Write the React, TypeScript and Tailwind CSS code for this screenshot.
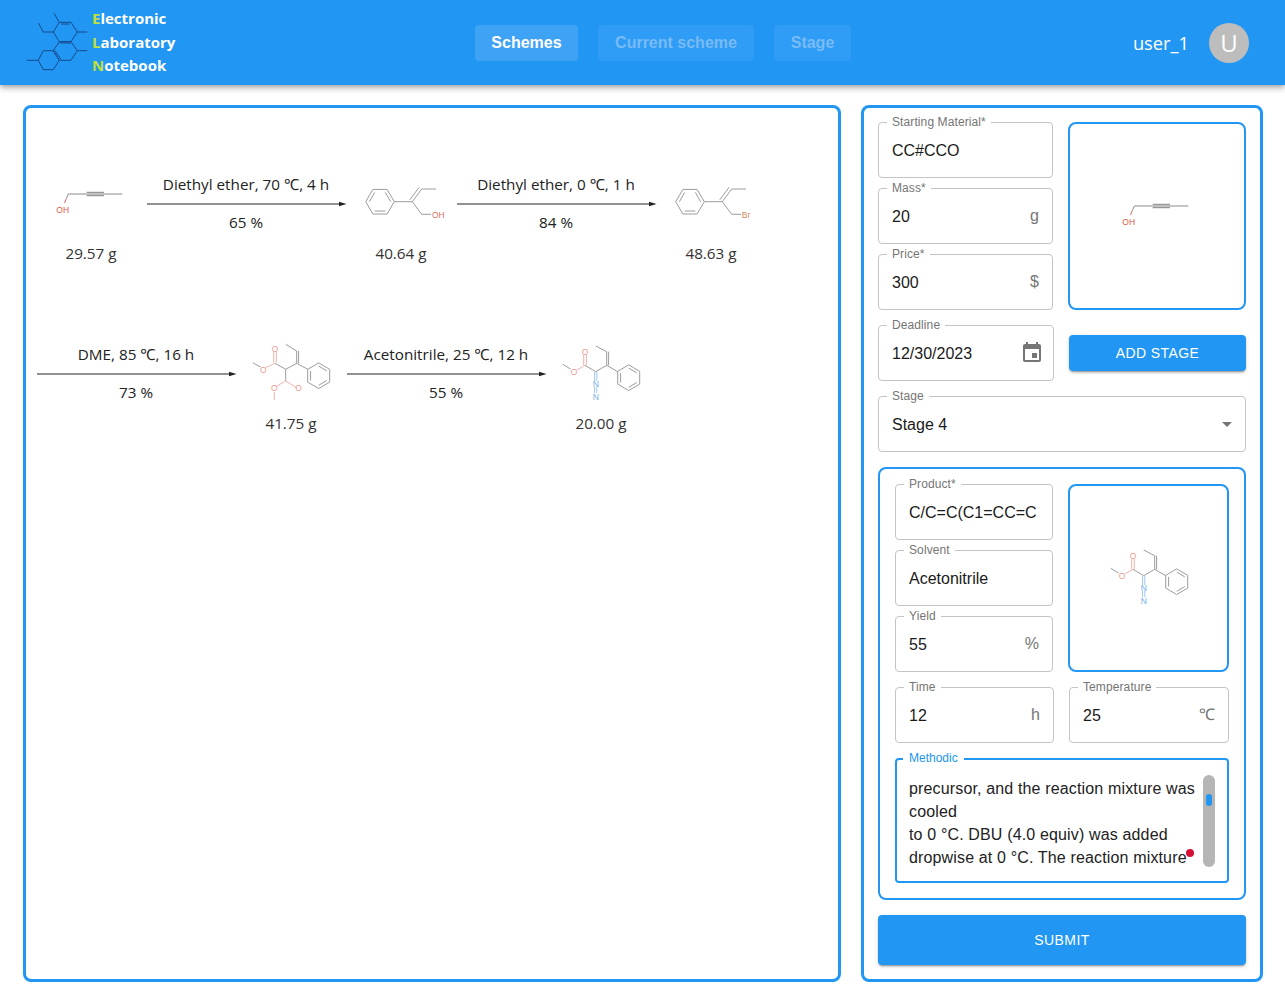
import type {ReactNode} from "react"

const sans = "font-['Liberation_Sans',Arial,sans-serif]"
const soft = "font-['Open_Sans','Noto_Sans',sans-serif]"

function Bonds({d, color = "#9c9c9c"}: {d: string, color?: string}) {
    return <path d={d} fill="none" stroke={color} strokeWidth="1" />
}

function Atom({x, y, color, children}: {x: number, y: number, color: string, children: string}) {
    return <text x={x} y={y} fill={color} fontSize="8.5" textAnchor="middle" dominantBaseline="central" fontFamily="'Liberation Sans', sans-serif">{children}</text>
}

function Svg({children}: {children: ReactNode}) {
    return <svg width="110" height="80" viewBox="0 0 110 80" className="block shrink-0">{children}</svg>
}

function Butynol() {
    return <Svg>
        <Bonds d="M30.4 33.5 L32.3 29 H50.7 M68 29 H86.3" color="#8a8a8a" />
        <Bonds d="M50.7 29 H68 M50.7 27.3 H68 M50.7 30.7 H68" color="#808080" />
        <Bonds d="M28.5 38 L30.4 33.5" color="#e06a5e" />
        <Atom x={26.7} y={45} color="#e0564a">OH</Atom>
    </Svg>
}

function PhenylAlkene({atom, atomX, color}: {atom: string, atomX: number, color: string}) {
    return <Svg>
        <Bonds d="M48.3 36.7 L41.1 24.4 H26.9 L19.7 36.7 L26.9 49 H41.1 Z" />
        <Bonds d="M44.6 36.7 L39.3 27.4 M28.7 27.4 L23.4 36.7 M28.7 46 H39.3" />
        <Bonds d="M48.3 36.7 H66.3 L75.7 24 H90 M63.8 34.8 L73.2 22.2 M66.3 36.7 L75.7 49.3 H85" />
        <Atom x={atomX} y={50} color={color}>{atom}</Atom>
    </Svg>
}

function Benzene({cy}: {cy: number}) {
    const top = cy - 12.8
    const bottom = cy + 12.8
    const upper = cy - 6.4
    const lower = cy + 6.4
    return <>
        <Bonds d={`M71.7 ${upper} L82.7 ${top} L93.7 ${upper} V${lower} L82.7 ${bottom} L71.7 ${lower} Z`} />
        <Bonds d={`M82.7 ${top + 3.2} L90.8 ${upper + 1.6} M90.8 ${lower - 1.6} L82.7 ${bottom - 3.2} M74.6 ${lower - 1.6} V${upper + 1.6}`} />
    </>
}

function Malonate() {
    const red = "#eeb5af"
    return <Svg>
        <Bonds d="M16.7 27.7 L24.5 32" />
        <Bonds d="M30 32.5 L39 28.3 M37.7 27.5 V17 M40.3 27.5 V17" color={red} />
        <Bonds d="M39 28.3 L49.7 34.3 L60.7 28.3 V16 L49.7 9.3 M62.6 28.3 V16 M60.7 28.3 L71.7 34.3 M49.7 34.3 V46" />
        <Bonds d="M49.7 46 L60.7 52.7 M49.7 46 L41 51 M38.3 57 V65" color={red} />
        <Atom x={27.3} y={34.5} color="#ec9a92">O</Atom>
        <Atom x={39} y={14} color="#ec9a92">O</Atom>
        <Atom x={38.3} y={53} color="#ec9a92">O</Atom>
        <Atom x={62.5} y={53} color="#ec9a92">O</Atom>
        <Benzene cy={40.7} />
    </Svg>
}

function Diazo() {
    const red = "#eeb5af"
    const blue = "#9cc8ee"
    return <Svg>
        <Bonds d="M16.7 29.3 L24.5 34" />
        <Bonds d="M31 35 L39 30.3 M37.7 30 V20 M40.3 30 V20" color={red} />
        <Bonds d="M39 30.3 L49.7 36.7 L60.7 30.3 V16.7 L49.7 11 M62.6 30.3 V16.7 M60.7 30.3 L71.7 36.7" />
        <Bonds d="M48.6 37 V46 M50.8 37 V46 M48.6 52 V58 M50.8 52 V58" color={blue} />
        <Atom x={28} y={36.5} color="#ec9a92">O</Atom>
        <Atom x={39} y={17} color="#ec9a92">O</Atom>
        <Atom x={49.7} y={49.3} color="#6fb0ea">N</Atom>
        <Atom x={49.7} y={61.7} color="#6fb0ea">N</Atom>
        <Benzene cy={42.7} />
    </Svg>
}

function Compound({mass, children}: {mass: string, children: ReactNode}) {
    return <div className="w-[110px] h-[170px] pt-[15px] flex flex-col items-center">
        {children}
        <div className="mt-[-3px] leading-[22px] text-[15.25px] text-[#333]">{mass}</div>
    </div>
}

function Reaction({conditions, yieldText}: {conditions: string, yieldText: string}) {
    return <div className="w-[200px] h-[170px] pt-[23px] flex flex-col items-center text-[15.25px] text-[#222]">
        <div className="leading-[22px] whitespace-nowrap">{conditions}</div>
        <svg width="200" height="8" viewBox="0 0 200 8" className="block mt-[5px] ml-[1px]">
            <path d="M0 4 H194" stroke="#222" strokeWidth="1" />
            <path d="M192 1.8 L199.5 4 L192 6.2 Z" fill="#222" />
        </svg>
        <div className="mt-[3px] leading-[22px]">{yieldText}</div>
    </div>
}

function Field({label, value, suffix, className, suffixClass}: {label: string, value: string, suffix?: ReactNode, className: string, suffixClass?: string}) {
    return <div className={"relative h-[56px] shrink-0 rounded border border-[#c4c4c4] flex items-center pl-[13px] pr-[13px] " + className}>
        <span className="absolute left-[8px] top-[-8px] px-[5px] bg-white text-[12px] tracking-[0.1px] leading-[14px] text-[#757575] whitespace-nowrap">{label}</span>
        <span className="flex-1 pt-[2px] overflow-hidden whitespace-nowrap text-[16px] text-[#1a1a1a]">{value}</span>
        {suffix && <span className={"text-[16px] text-[#757575] " + (suffixClass ?? "")}>{suffix}</span>}
    </div>
}

function Preview({className, children}: {className: string, children: ReactNode}) {
    return <div className={"h-[188px] pt-[2px] rounded-lg border-2 border-[#2196f3] flex items-center justify-center " + className}>
        {children}
    </div>
}

function Logo() {
    return <svg width="90" height="64" viewBox="26 12 90 64" className="block shrink-0" fill="none" stroke="#164a8c" strokeWidth="1">
        <path d="M59.3 23.3 H71 L77.3 33 L71 42.7 H59.3 L53.3 33 Z" />
        <path d="M59.3 42.7 H71 L77.3 51.7 L71 61.3 H59.3 L53.3 51.7 Z" />
        <path d="M53.3 51.7 L59.3 61.3 L53.3 70.7 H43.3 L38.3 61.3 L43.3 51.7 Z" />
        <path d="M59.3 23.3 L54 14.3 M53.3 33 H43.3 L38.3 24 M77.3 33 H87.3 M77.3 51.7 H87.3 M38.3 61.3 H26.7" />
        <path d="M61 25 H69.3 M60 44 H70.7 M55 51.7 L60.7 60" />
    </svg>
}

function NavButton({children, className, active}: {children: string, className: string, active?: boolean}) {
    return <div className={"h-[36px] rounded flex items-center justify-center text-[16px] font-bold " + className + " " + (active ? "bg-[#3fa3f5] text-white" : "bg-[#2f9cf5] text-[#78bbf6]")}>
        {children}
    </div>
}

function ActionButton({children, className}: {children: string, className: string}) {
    return <div className={"rounded bg-[#2196f3] text-white text-[14px] tracking-[0.4px] flex items-center justify-center shadow-[0_3px_1px_-2px_rgba(0,0,0,0.2),0_2px_2px_0_rgba(0,0,0,0.14),0_1px_5px_0_rgba(0,0,0,0.12)] " + className}>
        {children}
    </div>
}

export default function App() {
    return <div className={"w-[1285px] h-[1006px] bg-white overflow-hidden " + sans}>
        <header className="h-[85px] bg-[#2196f3] flex items-center shadow-[0_2px_4px_-1px_rgba(0,0,0,0.2),0_4px_5px_0_rgba(0,0,0,0.14),0_1px_10px_0_rgba(0,0,0,0.12)] relative">
            <div className="w-[475px] flex items-center pl-[26px]">
                <Logo />
                <div className={"ml-[-24px] text-[15px] font-bold leading-[23.5px] text-white " + soft}>
                    <div><span className="text-[#bfe03c]">E</span>lectronic</div>
                    <div><span className="text-[#bfe03c]">L</span>aboratory</div>
                    <div><span className="text-[#bfe03c]">N</span>otebook</div>
                </div>
            </div>
            <nav className="flex gap-[20px]">
                <NavButton active className="w-[103px]">Schemes</NavButton>
                <NavButton className="w-[156px]">Current scheme</NavButton>
                <NavButton className="w-[77px]">Stage</NavButton>
            </nav>
            <div className="ml-auto pr-[36px] flex items-center gap-[20px]">
                <span className={"text-[18.3px] text-white " + soft}>user_1</span>
                <div className={"w-[40px] h-[40px] rounded-full bg-[#bdbdbd] text-white text-[24px] flex items-center justify-center " + soft}>U</div>
            </div>
        </header>

        <main className="flex gap-[20px] pl-[23px] pt-[20px]">
            <section className={"w-[818px] h-[877px] rounded-lg border-[3px] border-[#2196f3] pt-[42px] pl-[10px] flex flex-wrap content-start " + soft}>
                <Compound mass="29.57 g"><Butynol /></Compound>
                <Reaction conditions="Diethyl ether, 70 ℃, 4 h" yieldText="65 %" />
                <Compound mass="40.64 g"><PhenylAlkene atom="OH" atomX={92.3} color="#e0705f" /></Compound>
                <Reaction conditions="Diethyl ether, 0 ℃, 1 h" yieldText="84 %" />
                <Compound mass="48.63 g"><PhenylAlkene atom="Br" atomX={90} color="#c98a5f" /></Compound>
                <Reaction conditions="DME, 85 ℃, 16 h" yieldText="73 %" />
                <Compound mass="41.75 g"><Malonate /></Compound>
                <Reaction conditions="Acetonitrile, 25 ℃, 12 h" yieldText="55 %" />
                <Compound mass="20.00 g"><Diazo /></Compound>
            </section>

            <section className="w-[402px] h-[877px] rounded-lg border-[3px] border-[#2196f3] p-[14px]">
                <div className="flex gap-[15px]">
                    <div className="flex flex-col gap-[10px]">
                        <Field label="Starting Material*" value="CC#CCO" className="w-[175px]" />
                        <Field label="Mass*" value="20" suffix="g" className="w-[175px]" />
                        <Field label="Price*" value="300" suffix="$" className="w-[175px]" />
                    </div>
                    <Preview className="w-[178px]"><Butynol /></Preview>
                </div>

                <div className="mt-[15px] flex items-center gap-[15px]">
                    <Field
                        label="Deadline"
                        value="12/30/2023"
                        className="w-[176px]"
                        suffixClass="mr-[-4px]"
                        suffix={<svg width="24" height="24" viewBox="0 0 24 24" fill="#757575" className="block">
                            <path d="M17 12h-5v5h5v-5zM16 1v2H8V1H6v2H5c-1.11 0-1.99.9-1.99 2L3 19c0 1.1.89 2 2 2h14c1.1 0 2-.9 2-2V5c0-1.1-.9-2-2-2h-1V1h-2zm3 18H5V8h14v11z" />
                        </svg>} />
                    <ActionButton className="w-[177px] h-[36px]">ADD STAGE</ActionButton>
                </div>

                <Field
                    label="Stage"
                    value="Stage 4"
                    className="w-[368px] mt-[15px]"
                    suffixClass="mr-[-7px]"
                    suffix={<svg width="24" height="24" viewBox="0 0 24 24" fill="#757575" className="block"><path d="M7 10l5 5 5-5z" /></svg>} />

                <div className="w-[368px] h-[433px] mt-[15px] rounded-lg border-2 border-[#2196f3] p-[15px]">
                    <div className="flex gap-[15px]">
                        <div className="flex flex-col gap-[10px]">
                            <Field label="Product*" value="C/C=C(C1=CC=C" className="w-[158px]" />
                            <Field label="Solvent" value="Acetonitrile" className="w-[158px]" />
                            <Field label="Yield" value="55" suffix="%" className="w-[158px]" />
                        </div>
                        <Preview className="w-[161px]"><Diazo /></Preview>
                    </div>
                    <div className="mt-[15px] flex gap-[15px]">
                        <Field label="Time" value="12" suffix="h" className="w-[159px]" />
                        <Field label="Temperature" value="25" suffix="℃" className="w-[160px]" />
                    </div>
                    <div className="relative w-[334px] h-[125px] mt-[15px] rounded border-2 border-[#2196f3] pl-[12px] pr-[12px] pt-[15px] flex items-start gap-[8px]">
                        <span className="absolute left-[6px] top-[-9px] px-[6px] bg-white text-[12px] leading-[14px] text-[#2196f3]">Methodic</span>
                        <div className="relative w-[288px] h-[94px] pt-[2px] text-[16px] tracking-[0.15px] leading-[23px] text-[#222] overflow-hidden">
                            <div className="whitespace-nowrap">precursor, and the reaction mixture was</div>
                            <div>cooled</div>
                            <div className="whitespace-nowrap">to 0 °C. DBU (4.0 equiv) was added</div>
                            <div className="whitespace-nowrap">dropwise at 0 °C. The reaction mixture</div>
                        </div>
                        <div className="relative w-[12px] h-[92px] rounded-md bg-[#b5b5b5] flex justify-center pt-[19px]">
                            <div className="w-[6px] h-[12px] rounded-[3px] bg-[#2196f3]" />
                        </div>
                        <div className="absolute left-[289px] top-[89px] w-[8px] h-[8px] rounded-full bg-[#d50f35]" />
                    </div>
                </div>

                <ActionButton className="w-[368px] h-[50px] mt-[15px]">SUBMIT</ActionButton>
            </section>
        </main>
    </div>
}
